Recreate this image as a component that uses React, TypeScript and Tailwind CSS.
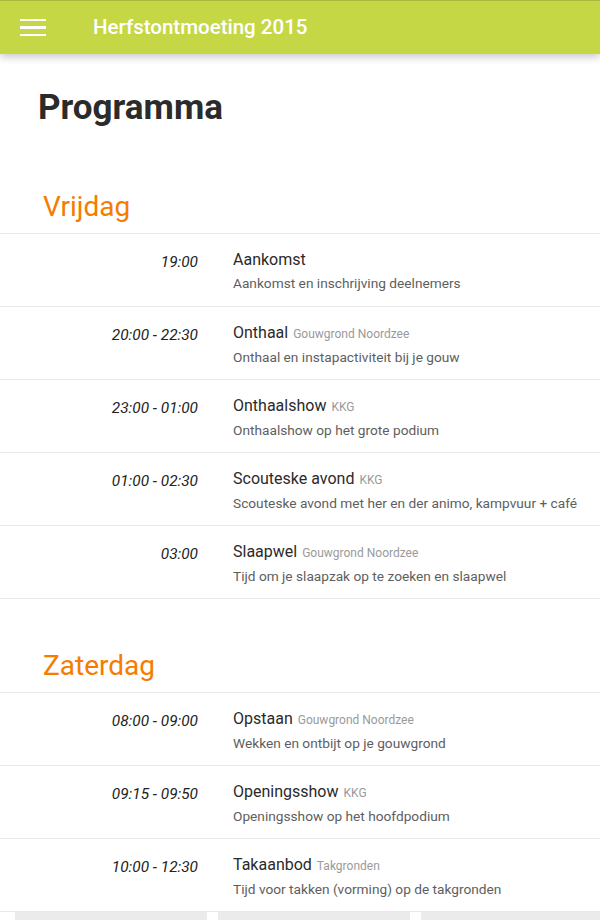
import React from "react";

type Item = { time: string; title: string; loc?: string; desc: string };

const vrijdag: Item[] = [
  { time: "19:00", title: "Aankomst", desc: "Aankomst en inschrijving deelnemers" },
  { time: "20:00 - 22:30", title: "Onthaal", loc: "Gouwgrond Noordzee", desc: "Onthaal en instapactiviteit bij je gouw" },
  { time: "23:00 - 01:00", title: "Onthaalshow", loc: "KKG", desc: "Onthaalshow op het grote podium" },
  { time: "01:00 - 02:30", title: "Scouteske avond", loc: "KKG", desc: "Scouteske avond met her en der animo, kampvuur + café" },
  { time: "03:00", title: "Slaapwel", loc: "Gouwgrond Noordzee", desc: "Tijd om je slaapzak op te zoeken en slaapwel" },
];

const zaterdag: Item[] = [
  { time: "08:00 - 09:00", title: "Opstaan", loc: "Gouwgrond Noordzee", desc: "Wekken en ontbijt op je gouwgrond" },
  { time: "09:15 - 09:50", title: "Openingsshow", loc: "KKG", desc: "Openingsshow op het hoofdpodium" },
  { time: "10:00 - 12:30", title: "Takaanbod", loc: "Takgronden", desc: "Tijd voor takken (vorming) op de takgronden" },
];

function Row({ item }: { item: Item }) {
  return (
    <div className="flex h-[73px] border-b border-[#e9e9e9]">
      <div className="w-[198px] shrink-0 pt-[18px] text-right text-[15.4px] italic leading-[20px] text-[#222]">
        {item.time}
      </div>
      <div className="pl-[35px] pt-[16px]">
        <div className="text-[16px] leading-[20px] text-[#2a2a2a]">
          {item.title}
          {item.loc && <span className="ml-[5px] text-[12px] text-[#9a9a9a]">{item.loc}</span>}
        </div>
        <div className="mt-[4px] text-[13.7px] leading-[18px] text-[#5e5e5e]">{item.desc}</div>
      </div>
    </div>
  );
}

export default function App() {
  return (
    <div className="h-[920px] w-[600px] overflow-hidden bg-white" style={{ fontFamily: "Roboto, 'Noto Sans', sans-serif" }}>
      <header className="relative z-10 flex h-[54px] items-center border-t border-[#a9b83a] bg-[#c5d745] shadow-[0_3px_8px_rgba(0,0,0,0.22)]">
        <div className="ml-[20px] flex w-[26px] flex-col gap-[5px]">
          <span className="block h-[2.5px] bg-white" />
          <span className="block h-[2.5px] bg-white" />
          <span className="block h-[2.5px] bg-white" />
        </div>
        <div className="ml-[47px] text-[20.5px] font-medium text-white">Herfstontmoeting 2015</div>
      </header>
      <main>
        <h1 className="mt-[34px] pl-[38px] text-[35px] font-bold leading-[40px] text-[#2b2b2b]">Programma</h1>
        <h2 className="mt-[62px] border-b border-[#e9e9e9] pb-[9px] pl-[43px] text-[28px] leading-[34px] text-[#f57c00]">Vrijdag</h2>
        {vrijdag.map((it) => (
          <Row key={it.title} item={it} />
        ))}
        <h2 className="mt-[50px] border-b border-[#e9e9e9] pb-[9px] pl-[43px] text-[28px] leading-[34px] text-[#f57c00]">Zaterdag</h2>
        {zaterdag.map((it) => (
          <Row key={it.title} item={it} />
        ))}
        <div className="flex gap-[11px] pl-[15px]">
          <div className="h-[40px] w-[192px] shrink-0 bg-[#ebebeb] pt-[6px] text-center text-[14px] text-[#555]">Voormiddag / Zaterdag</div>
          <div className="h-[40px] w-[192px] shrink-0 bg-[#ebebeb] pt-[6px] text-center text-[14px] text-[#555]">Namiddag / Zaterdag</div>
          <div className="h-[40px] w-[192px] shrink-0 bg-[#ebebeb] pt-[6px] text-center text-[14px] text-[#555]">Avond / Zaterdag</div>
        </div>
      </main>
    </div>
  );
}
